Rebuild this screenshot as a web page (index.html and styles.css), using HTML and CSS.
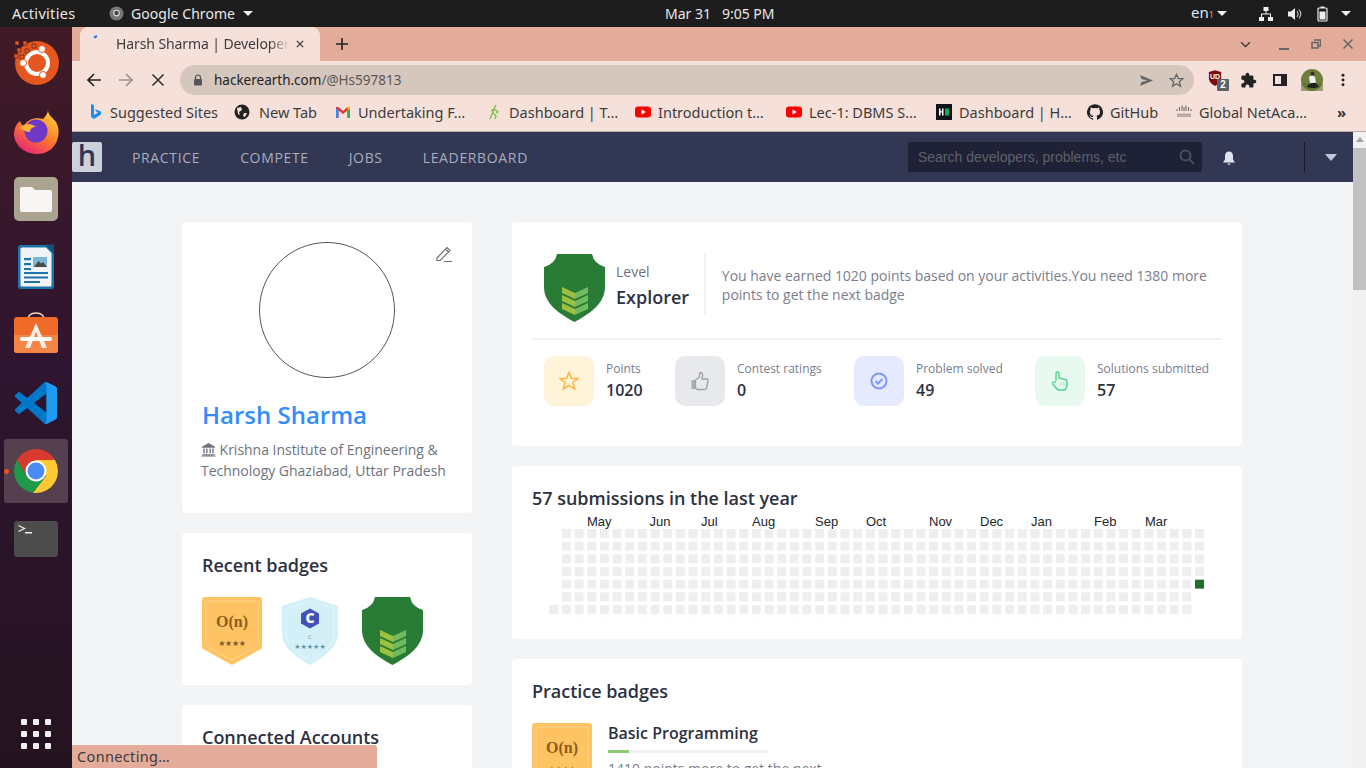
FILE: index.html
```html
<!DOCTYPE html>
<html lang="en">
<head>
<meta charset="utf-8">
<title>Harsh Sharma | Developer Profile</title>
<link rel="stylesheet" href="styles.css">
</head>
<body>
<svg class="defs" width="0" height="0" aria-hidden="true">
  <symbol id="shield-green" viewBox="0 0 61 68">
    <path d="M13 0H48Q50 10 61 13V33C61 50 45 60 30.500 68C16 60 0 50 0 33V13Q11 10 13 0Z" fill="#297c36"/>
    <path d="M18 33L31 39V45L18 39Z" fill="#9cc041"/><path d="M31 39L44 33V39L31 45Z" fill="#70bb60"/>
    <path d="M18 41L31 47V53L18 47Z" fill="#9cc041"/><path d="M31 47L44 41V47L31 53Z" fill="#70bb60"/>
    <path d="M18 49L31 55V61L18 55Z" fill="#9cc041"/><path d="M31 55L44 49V55L31 61Z" fill="#70bb60"/>
  </symbol>
  <symbol id="badge-gold" viewBox="0 0 60 68">
    <path d="M3 0H57Q60 0 60 3V49Q60 52 57 53L32 67Q30 68 28 67L3 53Q0 52 0 49V3Q0 0 3 0Z" fill="#fec464"/>
    <path d="M5 4H55Q56 4 56 5V47Q56 49 54 50L30 63L6 50Q4 49 4 47V5Q4 4 5 4Z" fill="none" stroke="#ffd488" stroke-width="1"/>
  </symbol>
  <symbol id="badge-blue" viewBox="0 0 56 68">
    <path d="M28 0L56 9V37C56 50 42 60 28 68C14 60 0 50 0 37V9Z" fill="#d3f0f9"/>
    <path d="M28 4L52 12V37C52 48 40 57 28 64C16 57 4 48 4 37V12Z" fill="none" stroke="#e4f6fb" stroke-width="1"/>
    <path d="M28 11.500L37 16.500V26.500L28 31.500L19 26.500V16.500Z" fill="#4551ba"/>
  </symbol>
  <symbol id="bell" viewBox="0 0 16 16"><path d="M8 1.500C5.500 1.500 4 3.500 4 6V9.500L2 12.500H14L12 9.500V6C12 3.500 10.500 1.500 8 1.500ZM6.300 13.500A1.800 1.800 0 0 0 9.700 13.500Z"/></symbol>
  <symbol id="yt" viewBox="0 0 16 16"><rect x="0" y="2.500" width="16" height="11" rx="3" fill="#f00"/><path d="M6.500 5.500L11 8L6.500 10.500Z" fill="#fff"/></symbol>
</svg>

<div class="screen">
  <header class="topbar">
    <span class="top-activities">Activities</span>
    <span class="top-app">
      <svg class="top-chrome" viewBox="0 0 16 16"><circle cx="8" cy="8" r="7.500" fill="#777"/><circle cx="8" cy="7.500" r="3" fill="#444" stroke="#ddd" stroke-width="1.200"/></svg>
      Google Chrome<i class="caret"></i>
    </span>
    <span class="top-clock">Mar 31&nbsp;&nbsp; 9:05 PM</span>
    <span class="top-tray">
      <span class="top-lang">en<small>1</small></span><i class="caret"></i>
      <svg class="tray-net" viewBox="0 0 16 16" fill="#eee"><rect x="5.500" y="1" width="5" height="4"/><rect x="1" y="11" width="5" height="4"/><rect x="10" y="11" width="5" height="4"/><path d="M7.500 5H8.500V7.500H13V11H12V8.500H4V11H3V7.500H7.500Z"/></svg>
      <svg class="tray-vol" viewBox="0 0 16 16" fill="#eee"><path d="M1 5.500H4L8 2V14L4 10.500H1Z"/><path d="M10 5Q12 8 10 11M12 3.500Q15.500 8 12 12.500" fill="none" stroke="#bbb" stroke-width="1.200"/></svg>
      <svg class="tray-bat" viewBox="0 0 12 16"><rect x="1" y="2" width="9" height="13" rx="1" fill="none" stroke="#eee" stroke-width="1.200"/><rect x="3.500" y="0.500" width="4" height="1.500" fill="#eee"/><rect x="2.500" y="5.500" width="6" height="8" fill="#eee"/></svg>
      <i class="caret"></i>
    </span>
  </header>

  <div class="desktop">
    <nav class="dock">
      <div class="dock-item">
        <svg viewBox="0 0 48 48"><circle cx="25" cy="24" r="22" fill="#e5571f"/><path d="M3 2h4v4H3zM11 2h4v4h-4zM20 5h4v4h-4zM5 9h4v4H5zM13 10h4v4h-4zM2 15h4v4H2zM8 16h4v4H8z" fill="#e5571f" stroke="#3c1a26" stroke-width=".6"/><circle cx="25" cy="24" r="11" fill="none" stroke="#fff" stroke-width="4"/><circle cx="30" cy="10" r="3.500" fill="#fff" stroke="#e5571f"/><circle cx="11" cy="24" r="3.500" fill="#fff" stroke="#e5571f"/><circle cx="31" cy="36" r="3.500" fill="#fff" stroke="#e5571f"/></svg>
      </div>
      <div class="dock-item">
        <svg viewBox="0 0 48 48"><defs><linearGradient id="ff" x1="0.800" y1="0" x2="0.200" y2="1"><stop offset="0" stop-color="#ffd13a"/><stop offset=".5" stop-color="#ff7a2a"/><stop offset="1" stop-color="#e5207e"/></linearGradient></defs><path d="M36 3C36 8 40 10 44 15C47 20 47 26 46 30C44 41 35 47 25 47C12 47 3 38 2 28C2 22 4 17 8 14C9 17 10 18 12 19C15 12 24 10 31 12C34 9 36 6 36 3Z" fill="url(#ff)"/><circle cx="24" cy="24" r="11.500" fill="#6f39c8"/><path d="M8 21C12 16 19 16 24 20C20 20 18 22 18 25C14 25 11 23 8 21Z" fill="#ffb23a"/></svg>
      </div>
      <div class="dock-item">
        <svg viewBox="0 0 48 48"><rect x="2" y="2" width="44" height="44" rx="5" fill="#aaa491"/><path d="M8 14Q8 12 10 12H20L23 15H38Q40 15 40 17V35Q40 37 38 37H10Q8 37 8 35Z" fill="#f7f6f4"/></svg>
      </div>
      <div class="dock-item">
        <svg viewBox="0 0 48 48"><path d="M9 2H36L42 8V43Q42 46 39 46H9Q6 46 6 43V5Q6 2 9 2Z" fill="#1c75a8"/><path d="M10 4.500H34L39.500 10V42Q39.500 43.500 38 43.500H10Q8.500 43.500 8.500 42V6Q8.500 4.500 10 4.500Z" fill="#f2f3f5"/><path d="M33 1.500H42V11Z" fill="#12527c"/><rect x="12" y="15" width="7" height="2.200" fill="#1c75a8"/><rect x="12" y="20" width="7" height="2.200" fill="#1c75a8"/><rect x="12" y="25" width="7" height="2" fill="#1c75a8"/><rect x="21" y="14" width="14" height="10" fill="#7db8d8"/><path d="M22 24L26.500 18L29 20.500L31 19L35 24Z" fill="#4a4a4a"/><rect x="12" y="29" width="24" height="2" fill="#1c75a8"/><rect x="12" y="33.500" width="24" height="2" fill="#1c75a8"/><rect x="12" y="38" width="16" height="2" fill="#1c75a8"/></svg>
      </div>
      <div class="dock-item">
        <svg viewBox="0 0 48 48"><path d="M16 9Q16 2 24 2Q32 2 32 9" fill="none" stroke="#f5d5b0" stroke-width="1.500"/><path d="M5 6H43Q46 6 46 9V39Q46 42 43 42H5Q2 42 2 39V9Q2 6 5 6Z" fill="#f06a2a"/><path d="M2 24H46V39Q46 42 43 42H5Q2 42 2 39Z" fill="#f58447"/><path d="M24 12L35 37H30L24 21L18 37H13Z" fill="#fbeee6"/><rect x="8" y="26" width="32" height="4" rx="2" fill="#fff"/></svg>
      </div>
      <div class="dock-item">
        <svg viewBox="0 0 100 100" class="dock-code"><path d="M96.460 10.800L75.860.870a6.230 6.230 0 0 0-7.100 1.210L29.300 38.070 12.100 25.020a4.170 4.170 0 0 0-5.320.240l-5.500 5a4.170 4.170 0 0 0 0 6.160L16.200 50 1.280 63.580a4.170 4.170 0 0 0 0 6.160l5.500 5a4.170 4.170 0 0 0 5.320.240l17.200-13.050 39.460 36a6.230 6.230 0 0 0 7.100 1.200l20.600-9.900A6.250 6.250 0 0 0 100 83.600V16.430a6.250 6.250 0 0 0-3.540-5.630ZM75 72.700L45.060 50 75 27.300v45.400Z" fill="#0078c9"/><path d="M71 1.500a6 6 0 0 1 5-.6l20.600 9.900A6.250 6.250 0 0 1 100 16.400V83.600a6.250 6.250 0 0 1-3.540 5.630l-20.600 9.900a6 6 0 0 1-5-.6Q75 97 75 93V7q0-4-4-5.500Z" fill="#1f9cf0"/></svg>
      </div>
      <div class="dock-item dock-active">
        <i class="dock-dot"></i>
        <svg viewBox="0 0 48 48"><path d="M5 13A22 22 0 0 1 43 13H24L14.500 29Z" fill="#d93a2f"/><path d="M43 13A22 22 0 0 1 21 45.800L34 29L24 13Z" fill="#fcc934"/><path d="M21 45.800A22 22 0 0 1 5 13L14.500 29L34 29Z" fill="#1e9a4a"/><circle cx="24" cy="24" r="10.500" fill="#fff"/><circle cx="24" cy="24" r="8.500" fill="#4b8bf5"/></svg>
      </div>
      <div class="dock-item">
        <svg viewBox="0 0 48 48"><rect x="2" y="6" width="44" height="36" rx="3" fill="#4c4c4c"/><path d="M6.500 10.500L12.500 13.500L6.500 16.500" fill="none" stroke="#eee" stroke-width="1.300"/><rect x="13" y="17" width="7" height="1.500" fill="#eee"/></svg>
      </div>
      <div class="dock-apps">
        <i></i><i></i><i></i><i></i><i></i><i></i><i></i><i></i><i></i>
      </div>
    </nav>

    <main class="browser">
      <div class="tabstrip">
        <div class="tab">
          <svg class="tab-spin" viewBox="0 0 16 16"><path d="M5 8.500L8 7" stroke="#1a73e8" stroke-width="2"/></svg>
          <span class="tab-title">Harsh Sharma | Developer Profile</span>
          <svg class="tab-x" viewBox="0 0 10 10"><path d="M1 1L9 9M9 1L1 9" stroke="#333" stroke-width="1.500"/></svg>
        </div>
        <svg class="tab-new" viewBox="0 0 12 12"><path d="M6 0V12M0 6H12" stroke="#222" stroke-width="1.600"/></svg>
        <div class="win-controls">
          <svg class="win-tabs" viewBox="0 0 12 8"><path d="M1 1.500L6 6.500L11 1.500" fill="none" stroke="#333" stroke-width="1.500"/></svg>
          <svg class="win-min" viewBox="0 0 10 10"><rect x="0" y="8" width="10" height="2" fill="#666"/></svg>
          <svg class="win-max" viewBox="0 0 10 10"><path d="M3 1H9.500V7H7M1 3.500H7V9H1Z" fill="none" stroke="#666" stroke-width="1.500"/></svg>
          <svg class="win-close" viewBox="0 0 10 10"><path d="M.5 .5L9.500 9.500M9.500 .5L.5 9.500" stroke="#666" stroke-width="1.500"/></svg>
        </div>
      </div>

      <div class="toolbar">
        <svg class="tool" viewBox="0 0 16 16"><path d="M15 8H2M8 2L2 8L8 14" fill="none" stroke="#222" stroke-width="1.700"/></svg>
        <svg class="tool" viewBox="0 0 16 16"><path d="M1 8H14M8 2L14 8L8 14" fill="none" stroke="#9a9490" stroke-width="1.700"/></svg>
        <svg class="tool" viewBox="0 0 16 16"><path d="M2.500 2.500L13.500 13.500M13.500 2.500L2.500 13.500" stroke="#333" stroke-width="1.600"/></svg>
        <div class="omnibox">
          <svg class="lock" viewBox="0 0 10 12"><path d="M2.500 5V3.500a2.500 2.500 0 0 1 5 0V5" fill="none" stroke="#555" stroke-width="1.200"/><rect x="1" y="5" width="8" height="6.500" rx="1" fill="#555"/></svg>
          <span class="url">hackerearth.com<span class="url-path">/@Hs597813</span></span>
          <svg class="omni-send" viewBox="0 0 16 14"><path d="M1 1L15 7L1 13L2.500 8.500L9 7L2.500 5.500Z" fill="#666"/></svg>
          <svg class="omni-star" viewBox="0 0 16 16"><path d="M8 1.500L10 6H14.800L11 9.300L12.300 14.200L8 11.500L3.700 14.200L5 9.300L1.200 6H6Z" fill="none" stroke="#666" stroke-width="1.400"/></svg>
        </div>
        <div class="ext-ublock">
          <svg viewBox="0 0 16 18"><path d="M1 2L8 0L15 2V10Q14 15 8 18Q2 15 1 10Z" fill="#7d0a0e"/></svg>
          <span class="ext-ub">UD</span>
          <span class="ext-count">2</span>
        </div>
        <svg class="ext-puzzle" viewBox="0 0 24 24"><path d="M20.500 11H19V7c0-1.100-.9-2-2-2h-4V3.500C13 2.120 11.880 1 10.500 1S8 2.120 8 3.500V5H4c-1.100 0-1.990.9-1.990 2v3.800H3.500c1.490 0 2.700 1.210 2.700 2.700s-1.210 2.700-2.700 2.700H2V20c0 1.100.9 2 2 2h3.800v-1.500c0-1.490 1.210-2.700 2.700-2.700 1.490 0 2.700 1.210 2.700 2.700V22H17c1.100 0 2-.9 2-2v-4h1.500c1.380 0 2.500-1.120 2.500-2.500S21.880 11 20.500 11z" fill="#222"/></svg>
        <svg class="ext-side" viewBox="0 0 14 12"><path d="M0 0H14V12H0ZM2 2V10H8V2Z" fill="#222" fill-rule="evenodd"/></svg>
        <svg class="avatar" viewBox="0 0 22 22"><circle cx="11" cy="11" r="11" fill="#6d7f3a"/><path d="M0 14H22V22H0Z" fill="#5d6f2f" opacity=".6"/><circle cx="11.500" cy="4.500" r="2" fill="#3c2a20"/><path d="M8 8Q11 5.500 14 8L15 14H9Z" fill="#f2f2f2"/><path d="M6 17Q10 13 15 14L18 18Q12 20 6 18Z" fill="#222"/></svg>
        <svg class="menu-dots" viewBox="0 0 4 16"><circle cx="2" cy="2.500" r="1.700" fill="#222"/><circle cx="2" cy="8" r="1.700" fill="#222"/><circle cx="2" cy="13.500" r="1.700" fill="#222"/></svg>
      </div>

      <div class="bookmarks">
        <a class="bm bm-1"><svg viewBox="0 0 16 16"><path d="M4 0L7 1V11L11 8.500L9 7.500L8 5L14 7.500V10.500L7 15L4 13Z" fill="#1f8fe8"/></svg><span>Suggested Sites</span></a>
        <a class="bm bm-2"><svg viewBox="0 0 16 16"><circle cx="8" cy="8" r="7.500" fill="#222"/><path d="M3 4L7 3L8 6L5 8L6 11L4 10ZM10 9L13 9L11 13L9 12Z" fill="#f6e1da"/></svg><span>New Tab</span></a>
        <a class="bm bm-3"><svg viewBox="0 0 16 16"><path d="M1 3H3.500L8 7L12.500 3H15V14H12.500V6.500L8 10L3.500 6.500V14H1Z" fill="#d93a2f"/><path d="M1 4V14H3.500V6.500Z" fill="#4285f4"/><path d="M15 4V14H12.500V6.500Z" fill="#34a853"/><path d="M12.500 3H15V5L12.500 6.500Z" fill="#fbbc05"/></svg><span>Undertaking F…</span></a>
        <a class="bm bm-4"><svg viewBox="0 0 16 16"><path d="M10 1L8 5L6 10L4 15M8 5L12 8L10 9M7 9L10 12L9 15M8 5L5 7" fill="none" stroke="#7ac143" stroke-width="1.300"/></svg><span>Dashboard | T…</span></a>
        <a class="bm bm-5"><svg viewBox="0 0 16 16"><use href="#yt"/></svg><span>Introduction t…</span></a>
        <a class="bm bm-6"><svg viewBox="0 0 16 16"><use href="#yt"/></svg><span>Lec-1: DBMS S…</span></a>
        <a class="bm bm-7"><svg viewBox="0 0 16 16"><rect width="16" height="16" fill="#0e141e"/><path d="M3 4.500H4.500V7.200H6V4.500H7.500V11.500H6V8.500H4.500V11.500H3Z" fill="#fff"/><rect x="9" y="4.500" width="4" height="7" fill="#1ba94c"/></svg><span>Dashboard | H…</span></a>
        <a class="bm bm-8"><svg viewBox="0 0 24 24"><path d="M12 .3a12 12 0 0 0-3.800 23.400c.6.1.8-.3.8-.6v-2c-3.300.7-4-1.600-4-1.600-.6-1.400-1.400-1.800-1.400-1.800-1-.7.1-.7.1-.7 1.200.1 1.800 1.200 1.800 1.200 1 1.800 2.800 1.300 3.500 1 .1-.8.4-1.300.8-1.600-2.700-.3-5.500-1.300-5.500-6 0-1.200.5-2.300 1.300-3.100-.2-.4-.6-1.600 0-3.200 0 0 1-.3 3.400 1.200a11.500 11.500 0 0 1 6 0c2.300-1.500 3.300-1.200 3.300-1.200.6 1.600.2 2.800 0 3.200.9.800 1.300 1.900 1.300 3.200 0 4.600-2.800 5.600-5.500 5.900.5.4.9 1 .9 2.200v3.300c0 .3.1.7.8.6A12 12 0 0 0 12 .3" fill="#222"/></svg><span>GitHub</span></a>
        <a class="bm bm-9"><svg viewBox="0 0 16 16"><path d="M1 5V7M3.500 3V7M6 1.500V7M8 3V7M10 1.500V7M12.500 3V7M15 5V7" stroke="#555" stroke-width=".9"/><path d="M1 9.500H15V13H1Z" fill="#777" opacity=".5"/></svg><span>Global NetAca…</span></a>
        <span class="bm-more">»</span>
      </div>

      <div class="viewport">
        <div class="page">
          <div class="sitenav">
            <span class="logo">h</span>
            <a class="navlink">PRACTICE</a>
            <a class="navlink">COMPETE</a>
            <a class="navlink">JOBS</a>
            <a class="navlink">LEADERBOARD</a>
            <div class="search">
              <span class="search-text">Search developers, problems, etc</span>
              <svg viewBox="0 0 16 16"><circle cx="6.500" cy="6.500" r="5" fill="none" stroke="#4a5058" stroke-width="2"/><path d="M10.500 10.500L15 15" stroke="#4a5058" stroke-width="2"/></svg>
            </div>
            <svg class="nav-bell"><use href="#bell"/></svg>
            <i class="nav-sep"></i>
            <i class="nav-caret"></i>
          </div>

          <div class="columns">
            <aside class="col-left">
              <section class="card profile">
                <svg class="edit" viewBox="0 0 18 18"><path d="M2 13L12 2.500L15 5.500L5 15.500H2ZM10.500 4L13.500 7M9 16.500H17" fill="none" stroke="#6b6f76" stroke-width="1.200"/></svg>
                <div class="photo"></div>
                <h1 class="name">Harsh Sharma</h1>
                <p class="inst">
                  <svg viewBox="0 0 16 16"><path d="M8 1L15 5V6H1V5ZM2.500 7H4V12H2.500ZM5.500 7H7V12H5.500ZM9 7H10.500V12H9ZM12 7H13.500V12H12ZM1.500 13H14.500V14H1.500ZM.5 14.500H15.500V15.500H.5Z" fill="#6f7380"/></svg>
                  Krishna Institute of Engineering &amp; Technology Ghaziabad, Uttar Pradesh
                </p>
              </section>

              <section class="card recent">
                <h2 class="title">Recent badges</h2>
                <div class="recent-row">
                  <svg class="b-gold" viewBox="0 0 60 68"><use href="#badge-gold"/><text x="30" y="30" text-anchor="middle" class="on-text">O(n)</text><text x="30" y="49" text-anchor="middle" class="on-stars">★★★★</text></svg>
                  <svg class="b-blue" viewBox="0 0 56 68"><use href="#badge-blue"/><text x="28" y="26" text-anchor="middle" class="c-text">C</text><text x="28" y="42" text-anchor="middle" class="c-small">C</text><text x="28" y="52" text-anchor="middle" class="c-stars">★★★★★</text></svg>
                  <svg class="b-green b-shift"><use href="#shield-green"/></svg>
                </div>
              </section>

              <section class="card accounts">
                <h2 class="title">Connected Accounts</h2>
              </section>
            </aside>

            <div class="col-right">
              <section class="card level">
                <div class="level-top">
                  <svg class="b-green"><use href="#shield-green"/></svg>
                  <div class="level-name">
                    <span class="level-label">Level</span>
                    <strong class="level-value">Explorer</strong>
                  </div>
                  <p class="level-text">You have earned 1020 points based on your activities.You need 1380 more points to get the next badge</p>
                </div>
                <div class="stats">
                  <div class="stat stat-1">
                    <span class="tile tile-star"><svg viewBox="0 0 20 20"><path d="M10 1.500L12.500 7.500H19L13.800 11.500L15.700 18L10 14.300L4.300 18L6.200 11.500L1 7.500H7.500Z" fill="none" stroke="#fdb53f" stroke-width="1.500"/></svg></span>
                    <div class="stat-text"><span>Points</span><b>1020</b></div>
                  </div>
                  <div class="stat stat-2">
                    <span class="tile tile-thumb"><svg viewBox="0 0 20 20"><rect x="1.500" y="9" width="4" height="9" fill="#a9abb0"/><path d="M5.500 9L9.500 6V2.500Q9.500 1.500 11 1.500Q13 2 12.500 5L12 8H17Q18.500 8.500 18 10L16.500 17Q16 18.500 14.500 18.500H8Q6 18.500 5.500 17Z" fill="none" stroke="#a1a3a8" stroke-width="1.400"/></svg></span>
                    <div class="stat-text"><span>Contest ratings</span><b>0</b></div>
                  </div>
                  <div class="stat stat-3">
                    <span class="tile tile-check"><svg viewBox="0 0 20 20"><circle cx="10" cy="10" r="7.500" fill="none" stroke="#7f95ff" stroke-width="2"/><path d="M6.500 10L9 12.500L13.500 8" fill="none" stroke="#7f95ff" stroke-width="2"/></svg></span>
                    <div class="stat-text"><span>Problem solved</span><b>49</b></div>
                  </div>
                  <div class="stat stat-4">
                    <span class="tile tile-hand"><svg viewBox="0 0 20 20"><path d="M6 10V2.500Q6 1 7.500 1Q9 1 9 2.500V7L15 8.500Q17 9 17 11V14Q17 15.500 16 17L15 19H8L3 13.500Q2 12 3.500 11Q5 10.500 6 11.500" fill="none" stroke="#4ed48a" stroke-width="1.400"/><path d="M10 11V15M12 11V15M14 11V15" stroke="#a7e8c4" stroke-width=".8"/></svg></span>
                    <div class="stat-text"><span>Solutions submitted</span><b>57</b></div>
                  </div>
                </div>
              </section>

              <section class="card heat">
                <h2 class="title">57 submissions in the last year</h2>
                <svg class="heatmap" viewBox="0 0 690 98" width="690" height="98">
                  <defs>
                    <pattern id="cell" x="30" y="14" width="12.660" height="12.660" patternUnits="userSpaceOnUse">
                      <rect x="0" y="0" width="9" height="9" fill="#eeeeee"/>
                    </pattern>
                  </defs>
                  <text x="55" y="11">May</text><text x="117.500" y="11">Jun</text><text x="169" y="11">Jul</text><text x="220" y="11">Aug</text><text x="283" y="11">Sep</text><text x="334" y="11">Oct</text><text x="397" y="11">Nov</text><text x="448" y="11">Dec</text><text x="499" y="11">Jan</text><text x="562" y="11">Feb</text><text x="613" y="11">Mar</text>
                  <rect x="30" y="14" width="632.500" height="88.620" fill="url(#cell)"/>
                  <rect x="17.340" y="90" width="9" height="9" fill="#eeeeee"/>
                  <rect x="663" y="14" width="9" height="9" fill="#eeeeee"/>
                  <rect x="663" y="26.660" width="9" height="9" fill="#eeeeee"/>
                  <rect x="663" y="39.320" width="9" height="9" fill="#eeeeee"/>
                  <rect x="663" y="51.980" width="9" height="9" fill="#eeeeee"/>
                  <rect x="663" y="64.640" width="9" height="9" fill="#216e2c"/>
                </svg>
              </section>

              <section class="card practice">
                <h2 class="title">Practice badges</h2>
                <div class="practice-row">
                  <svg class="b-gold" viewBox="0 0 60 68"><use href="#badge-gold"/><text x="30" y="30" text-anchor="middle" class="on-text">O(n)</text><text x="30" y="49" text-anchor="middle" class="on-stars">★★★★</text></svg>
                  <div class="practice-info">
                    <h3 class="practice-name">Basic Programming</h3>
                    <div class="bar"><i class="bar-fill"></i></div>
                    <p class="practice-note">1410 points more to get the next</p>
                  </div>
                </div>
              </section>
            </div>
          </div>
        </div>
        <div class="scrollbar"><i class="sb-up"></i><i class="sb-thumb"></i></div>
      </div>
      <div class="status">Connecting…</div>
    </main>
  </div>
</div>
</body>
</html>
```

FILE: styles.css
```css
* { box-sizing: border-box; }
html, body { margin: 0; padding: 0; height: 100%; overflow: hidden; }
body { font-family: "Open Sans", "Noto Sans", sans-serif; color: #2d3142; background: #1d1d1d; }
.defs { position: absolute; }
h1, h2, h3, p { margin: 0; }
svg { display: block; flex: none; }

.screen { width: 1366px; height: 768px; display: flex; flex-direction: column; overflow: hidden; }

/* GNOME top bar */
.topbar { height: 27px; flex: none; background: #1d1d1d; color: #e8e8e8; font: 14px/27px "Noto Sans", sans-serif; display: flex; position: relative; padding-left: 12px; }
.top-activities { width: 97px; font-size: 14.500px; letter-spacing: .3px; }
.top-app { display: flex; align-items: center; gap: 7px; letter-spacing: .05px; }
.top-chrome { width: 15px; height: 15px; }
.caret { display: inline-block; width: 0; height: 0; border: 5px solid transparent; border-top: 5px solid #eee; border-bottom: 0; margin-left: 1px; }
.top-clock { position: absolute; left: 665px; top: 0; }
.top-tray { margin-left: auto; display: flex; align-items: center; padding-right: 15px; }
.top-lang { font-size: 15px; color: #d6eaf5; margin-right: 2px; }
.top-lang small { font-size: 9px; color: #d8a070; }
.tray-net { width: 16px; height: 16px; margin-left: 31px; }
.tray-vol { width: 16px; height: 16px; margin-left: 13px; }
.tray-bat { width: 12px; height: 16px; margin-left: 14px; margin-right: 11px; }

.desktop { flex: 1; display: flex; min-height: 0; }

/* Dock */
.dock { width: 72px; flex: none; background: linear-gradient(#411a25, #2f1530 45%, #24131f); display: flex; flex-direction: column; align-items: center; padding-top: 4px; padding-bottom: 19px; }
.dock-item { width: 64px; height: 64px; margin-bottom: 4px; display: flex; align-items: center; justify-content: center; position: relative; border-radius: 3px; }
.dock-item svg { width: 48px; height: 48px; }
.dock-item .dock-code { width: 42px; height: 42px; }
.dock-active { background: #54404f; }
.dock-dot { position: absolute; left: 0; top: 30px; width: 5px; height: 5px; border-radius: 50%; background: #e95420; }
.dock-apps { margin-top: auto; display: grid; grid-template-columns: repeat(3, 6px); gap: 6px; }
.dock-apps i { width: 6px; height: 6px; border-radius: 1px; background: #eeeeee; }

/* Browser */
.browser { flex: 1; min-width: 0; display: flex; flex-direction: column; position: relative; background: #f6e1da; }
.tabstrip { height: 34px; flex: none; background: #e2ab9a; display: flex; align-items: center; padding-left: 8px; }
.tab { width: 240px; height: 34px; background: #f6e1da; border-radius: 8px 8px 0 0; display: flex; align-items: center; padding-left: 9px; position: relative; }
.tab-spin { width: 16px; height: 16px; margin-top: -14px; }
.tab-title { font: 14px/34px "Noto Sans", sans-serif; letter-spacing: -.1px; color: #3c3c3c; margin-left: 11px; width: 174px; overflow: hidden; white-space: nowrap; -webkit-mask-image: linear-gradient(90deg, #000 88%, transparent); mask-image: linear-gradient(90deg, #000 88%, transparent); }
.tab-x { width: 8px; height: 8px; margin-left: 6px; }
.tab-new { width: 12px; height: 12px; margin-left: 16px; }
.win-controls { margin-left: auto; display: flex; align-items: center; padding-right: 13px; }
.win-tabs { width: 11px; height: 7px; margin-right: 28px; }
.win-min { width: 10px; height: 10px; margin-right: 22px; margin-top: 2px; }
.win-max { width: 10px; height: 10px; margin-right: 22px; }
.win-close { width: 10px; height: 10px; }

.toolbar { height: 34px; flex: none; padding: 4px 0 0 14px; display: flex; align-items: center; background: #f6e1da; }
.tool { width: 16px; height: 16px; margin-right: 16px; margin-top: -1px; }
.omnibox { width: 1014px; height: 30px; margin-left: -2px; border-radius: 15px; background: #d5c6be; display: flex; align-items: center; padding: 0 10px 0 13px; }
.lock { width: 10px; height: 12px; }
.url { font: 13.500px/30px "Noto Sans", sans-serif; color: #222; margin-left: 11px; }
.url-path { color: #5e5854; }
.omni-send { width: 15px; height: 13px; margin-left: auto; }
.omni-star { width: 15px; height: 15px; margin-left: 15px; }
.ext-ublock { width: 20px; height: 24px; margin-left: 14px; position: relative; }
.ext-ublock svg { width: 14px; height: 16px; margin-top: 2px; }
.ext-ub { position: absolute; left: 2px; top: 5px; font: bold 7px/8px "Liberation Sans", sans-serif; color: #fff; }
.ext-count { position: absolute; left: 9px; top: 11px; width: 12px; height: 12px; background: #5f6368; color: #fff; font: bold 10px/12px "Liberation Sans", sans-serif; text-align: center; border-radius: 1px; }
.ext-puzzle { width: 17px; height: 17px; margin-left: 12px; }
.ext-side { width: 14px; height: 12px; margin-left: 16px; }
.avatar { width: 22px; height: 22px; margin-left: 14px; }
.menu-dots { width: 4px; height: 14px; margin-left: 18px; }

.bookmarks { height: 37px; flex: none; display: flex; align-items: center; padding: 0 0 2px 15px; border-bottom: 1px solid #b9aca6; background: #f6e1da; position: relative; font: 14.500px/20px "Noto Sans", sans-serif; color: #3c3c3c; white-space: nowrap; }
.bm { display: flex; align-items: center; }
.bm svg { width: 16px; height: 16px; margin-right: 7px; }
.bm-1 { width: 147px; }
.bm-2 { width: 101px; }
.bm-2 svg { margin-right: 9px; }
.bm-3 { width: 151px; }
.bm-4 { width: 149px; }
.bm-5 { width: 151px; }
.bm-6 { width: 150px; }
.bm-7 { width: 151px; }
.bm-8 { width: 89px; }
.bm-9 { width: 140px; }
.bm-more { font-size: 15px; font-weight: 700; color: #333; margin-left: 21px; }

.viewport { flex: 1; min-height: 0; display: flex; overflow: hidden; }
.page { flex: 1; min-width: 0; background: #f3f4f6; }
.scrollbar { width: 13px; flex: none; background: #f1f1f1; display: flex; flex-direction: column; align-items: center; padding-top: 5px; }
.sb-up { width: 0; height: 0; border: 4px solid transparent; border-bottom: 5px solid #a3a3a3; border-top: 0; margin-bottom: 6px; }
.sb-thumb { width: 100%; height: 142px; background: #c1c1c1; }

/* Site nav */
.sitenav { height: 50px; background: #323754; display: flex; align-items: center; }
.logo { width: 30px; height: 30px; background: #cdd1db; border-radius: 2px; color: #323754; font: 600 29px/26px "Open Sans", sans-serif; text-align: center; margin-right: 30px; }
.navlink { font-size: 14px; font-weight: 500; letter-spacing: .65px; color: #a7adbf; margin-right: 40px; white-space: nowrap; }
.search { width: 294px; height: 30px; margin-left: 340px; background: #1f2237; border-radius: 2px; display: flex; align-items: center; justify-content: space-between; padding: 0 7px 0 10px; }
.search-text { font: 14px "Liberation Sans", sans-serif; color: #5e6168; }
.search svg { width: 16px; height: 16px; }
.nav-bell { width: 16px; height: 16px; margin-left: 19px; margin-top: 2px; fill: #dfe5f0; }
.nav-sep { width: 1px; height: 30px; background: #191b2b; margin-left: 67px; }
.nav-caret { width: 0; height: 0; border: 6px solid transparent; border-top: 7px solid #bcc8e0; border-bottom: 0; margin-left: 20px; }

/* Content columns */
.columns { display: flex; gap: 40px; padding: 40px 0 0 110px; align-items: flex-start; }
.col-left { width: 290px; display: flex; flex-direction: column; gap: 20px; }
.col-right { width: 730px; display: flex; flex-direction: column; gap: 20px; }
.card { background: #fff; border-radius: 4px; position: relative; }
.title { font-size: 18px; line-height: 24px; font-weight: 600; color: #2d3142; letter-spacing: -.02px; }

.profile { height: 291px; padding: 20px 20px 0; }
.edit { position: absolute; right: 19px; top: 23px; width: 18px; height: 18px; }
.photo { width: 136px; height: 136px; border: 1px solid #555; border-radius: 50%; margin: 0 auto; }
.name { font-size: 24px; line-height: 32px; font-weight: 600; color: #318cff; margin-top: 21px; }
.inst { font-size: 14px; line-height: 21px; letter-spacing: -.02px; color: #6e7280; margin-top: 8px; margin-left: -1px; }
.inst svg { display: inline-block; width: 15px; height: 15px; vertical-align: -2px; }

.recent { height: 152px; padding: 20px 20px 0; }
.recent-row { display: flex; gap: 20px; margin-top: 20px; }
.b-gold { width: 60px; height: 68px; }
.b-blue { width: 56px; height: 68px; }
.b-green { width: 61px; height: 68px; }
.b-shift { margin-left: 4px; }
.on-text { font: bold 16px "Liberation Serif", serif; fill: #8c5c20; }
.on-stars { font: 8px "DejaVu Sans", sans-serif; fill: #7b5a2e; letter-spacing: -.3px; }
.c-text { font: 800 14px "Open Sans", sans-serif; fill: #fff; }
.c-small { font: 6px "Open Sans", sans-serif; fill: #6d9bac; }
.c-stars { font: 7px "DejaVu Sans", sans-serif; fill: #5f93a5; }

.accounts { height: 200px; padding: 20px; }

.level { height: 224px; padding: 32px 20px 0; }
.level-top { display: flex; padding: 0 12px; height: 84px; }
.level-name { display: flex; flex-direction: column; margin-left: 11px; width: 90px; height: 60px; padding-top: 8px; }
.level-label { font-size: 14px; line-height: 20px; color: #6e7280; }
.level-value { font-size: 18px; line-height: 26px; font-weight: 600; color: #2d3142; margin-top: 2px; }
.level-text { height: 60px; border-left: 2px solid #f1f2f7; padding: 12px 0 0 16px; font-size: 14px; line-height: 19px; letter-spacing: -.02px; color: #7a7e8c; width: 518px; }
.stats { border-top: 2px solid #f1f2f7; display: flex; padding: 16px 12px 0; }
.stat { display: flex; gap: 12px; }
.stat-1 { width: 131px; }
.stat-2 { width: 179px; }
.stat-3 { width: 181px; }
.tile { width: 50px; height: 50px; border-radius: 10px; display: flex; align-items: center; justify-content: center; }
.tile svg { width: 20px; height: 20px; }
.tile-star { background: #fff4da; }
.tile-thumb { background: #e8e9ec; }
.tile-check { background: #e6eaff; }
.tile-hand { background: #e8f9ef; }
.stat-text { display: flex; flex-direction: column; }
.stat-text span { font-size: 12px; line-height: 18px; color: #7a7e8c; margin-top: 4px; white-space: nowrap; }
.stat-text b { font-size: 16px; line-height: 22px; font-weight: 600; color: #2d3142; margin-top: 1px; }

.heat { height: 173px; padding: 20px 20px 0; }
.heatmap { margin-top: 5px; overflow: visible; }
.heatmap text { font: 13px "Liberation Sans", sans-serif; fill: #24262b; }

.practice { height: 200px; padding: 20px 20px 0; }
.practice-row { display: flex; gap: 16px; margin-top: 20px; }
.practice-name { font-size: 16px; line-height: 22px; font-weight: 600; color: #2d3142; margin-top: -1px; }
.bar { width: 160px; height: 3px; background: #f0f1f4; margin-top: 6px; }
.bar-fill { display: block; width: 21px; height: 3px; background: #8ccb72; }
.practice-note { font-size: 14px; line-height: 20px; color: #7a7e8c; margin-top: 6px; }

.status { position: absolute; left: 0; bottom: 0; width: 305px; height: 23px; background: #e2ab9a; border-radius: 0 3px 0 0; font: 14.500px/22px "Noto Sans", sans-serif; letter-spacing: .35px; color: #3c3c3c; padding-left: 5px; }
```
